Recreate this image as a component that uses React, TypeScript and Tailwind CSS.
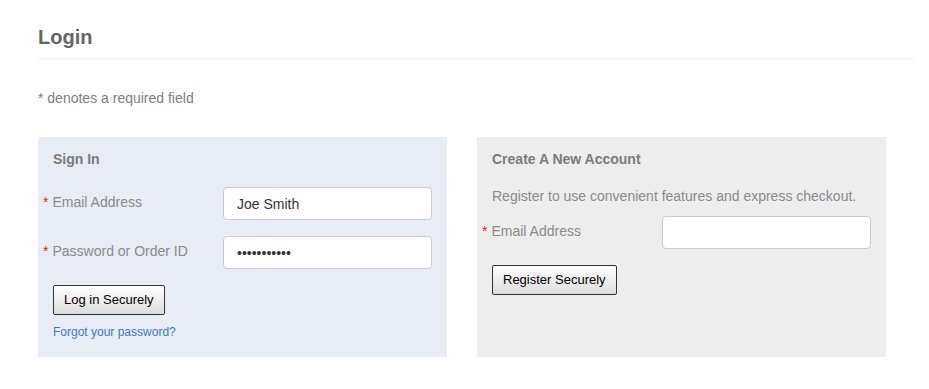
const Req = () => <span className="mr-[4px] text-[14px] text-[#e0262b]">*</span>;

const Field = ({ label, value, type = "text" }: { label: string; value: string; type?: string }) => (
  <div className="flex items-start">
    <label className="-ml-[10px] mt-[7px] flex w-[180px] items-center text-[14px] leading-[16px] text-[#8a8a8a]">
      <Req />
      {label}
    </label>
    <input
      type={type}
      defaultValue={value}
      className="h-[33px] w-[209px] rounded-[4px] border border-[#cccccc] bg-white px-[13px] text-[14px] text-[#333] outline-none"
    />
  </div>
);

const Button = ({ children }: { children: string }) => (
  <button className="h-[30px] rounded-[2px] border border-[#333] bg-gradient-to-b from-white to-[#dcdcdc] px-[10px] text-[13px] text-black">
    {children}
  </button>
);

export default function App() {
  return (
    <div className="min-h-[389px] bg-white pl-[38px] pr-[15px] font-['Liberation_Sans',Arial,sans-serif]">
      <h1 className="pt-[25px] pb-[9px] text-[20px] font-bold leading-[24px] text-[#666]">Login</h1>
      <div className="border-t border-[#f0f0f0]" />
      <p className="mt-[31px] text-[14px] leading-[16px] text-[#808080]">* denotes a required field</p>

      <div className="mt-[31px] flex gap-[30px]">
        <div className="h-[220px] w-[409px] bg-[#e8ecf5] px-[15px] pt-[14px]">
          <h2 className="text-[14px] font-bold leading-[16px] text-[#7a7a7a]">Sign In</h2>
          <div className="mt-[20px] flex flex-col gap-[16px]">
            <Field label="Email Address" value="Joe Smith" />
            <Field label="Password or Order ID" value="joesmith123" type="password" />
          </div>
          <div className="mt-[16px]">
            <Button>Log in Securely</Button>
          </div>
          <a href="#" className="mt-[10px] block text-[12px] leading-[14px] text-[#3b7bc4]">
            Forgot your password?
          </a>
        </div>

        <div className="h-[220px] w-[409px] bg-[#ededee] px-[15px] pt-[14px]">
          <h2 className="text-[14px] font-bold leading-[16px] text-[#7a7a7a]">Create A New Account</h2>
          <p className="mt-[21px] text-[14px] leading-[16px] text-[#8a8a8a]">
            Register to use convenient features and express checkout.
          </p>
          <div className="mt-[12px]">
            <Field label="Email Address" value="" type="email" />
          </div>
          <div className="mt-[16px]">
            <Button>Register Securely</Button>
          </div>
        </div>
      </div>
    </div>
  );
}
